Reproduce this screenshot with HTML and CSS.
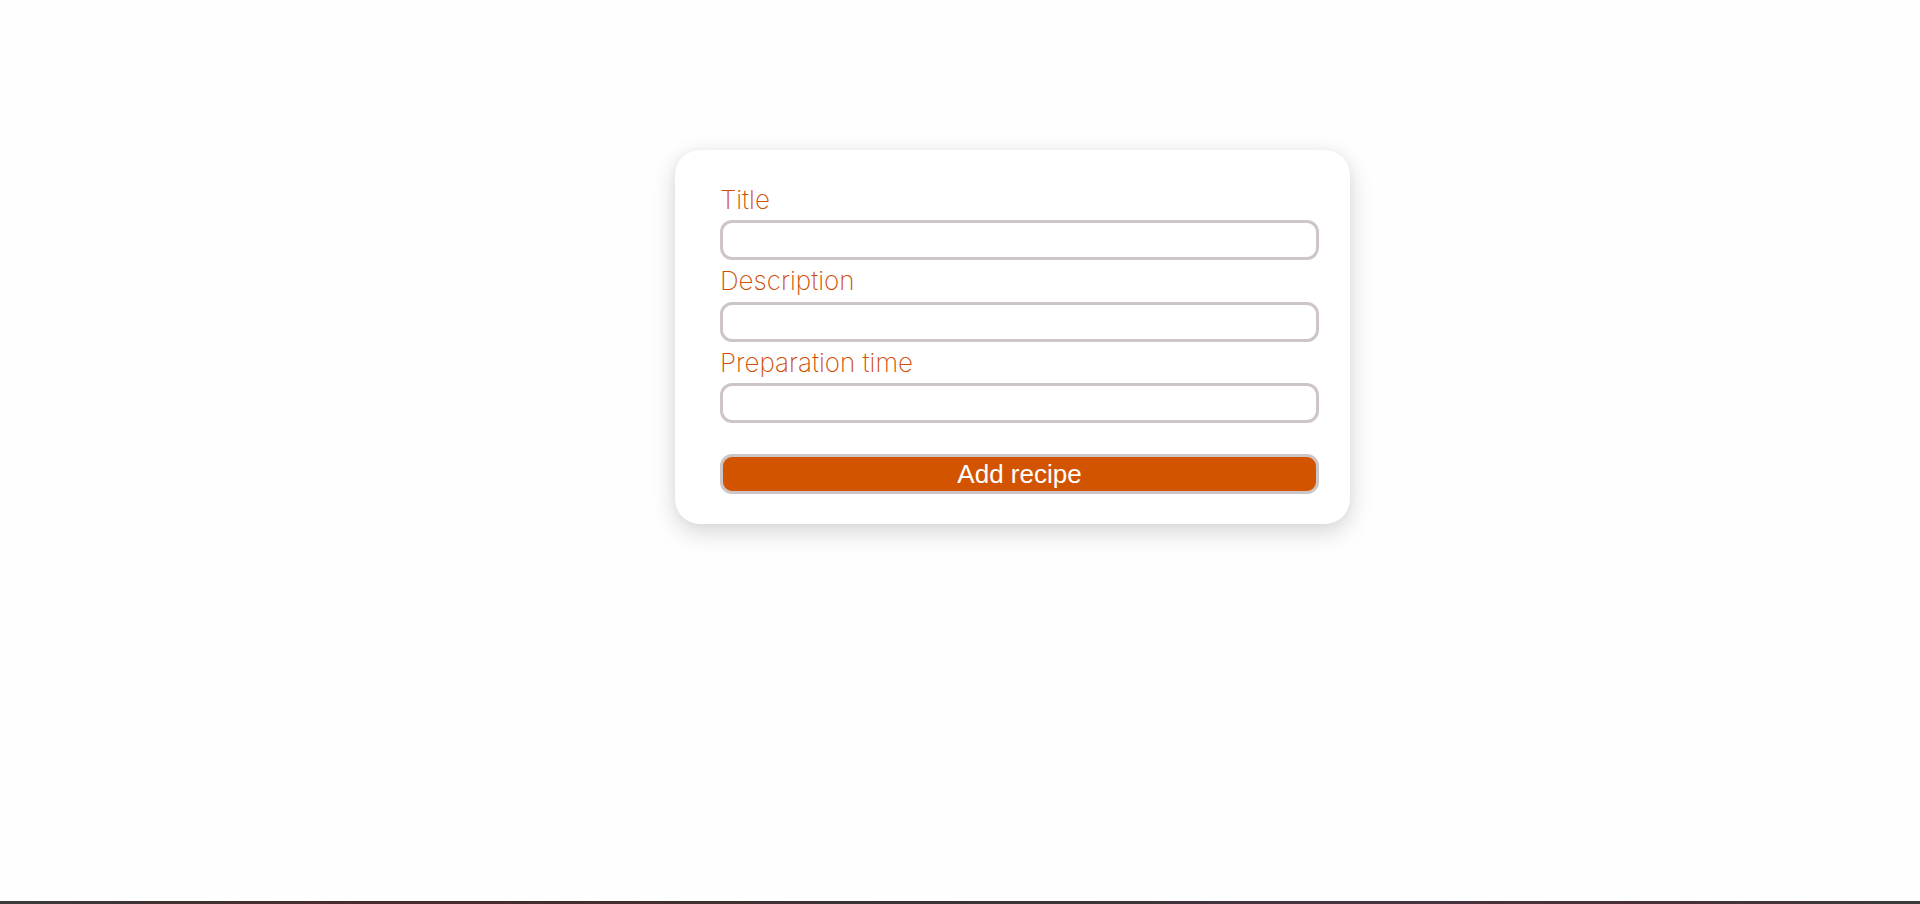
FILE: index.html
```html
<!DOCTYPE html>
<html lang="en">
<head>
<meta charset="utf-8">
<title>Add recipe</title>
<link rel="stylesheet" href="styles.css">
</head>
<body>
<div class="page">
  <main class="main">
    <form class="card">
      <label class="label" for="title">Title</label>
      <input class="field" id="title" type="text">
      <label class="label" for="description">Description</label>
      <input class="field" id="description" type="text">
      <label class="label" for="prep">Preparation time</label>
      <input class="field" id="prep" type="text">
      <button class="submit" type="button">Add recipe</button>
    </form>
  </main>
  <div class="bottom-bar"></div>
</div>
</body>
</html>
```
FILE: styles.css
```css
* { box-sizing: border-box; }
html, body { margin: 0; padding: 0; background: #fefefe; }
.page {
  min-height: 100vh;
  display: flex;
  flex-direction: column;
}
.main {
  flex: 1;
  display: flex;
  justify-content: center;
  align-items: flex-start;
  padding-top: 150px;
  padding-left: 105px;
}
.card {
  width: 675px;
  background: #ffffff;
  border-radius: 25px;
  box-shadow: 0 8px 24px rgba(0, 0, 0, 0.16), 0 0 10px rgba(0, 0, 0, 0.04);
  padding: 28.5px 31px 30px 45px;
  display: flex;
  flex-direction: column;
}
.label {
  font-family: Inter, "Noto Sans", sans-serif;
  font-weight: 250;
  font-size: 26px;
  line-height: 41.5px;
  color: #d04e05;
}
.field {
  height: 40px;
  width: 100%;
  border: 3px solid #cdc5c6;
  border-radius: 12px;
  background: #ffffff;
  margin: 0;
  padding: 0 10px;
  font-family: Inter, sans-serif;
  font-size: 18px;
  outline: none;
}
.submit {
  margin-top: 31px;
  height: 40px;
  width: 100%;
  border: 3px solid #cdc5c6;
  border-radius: 12px;
  background: #d35400;
  color: #ffffff;
  font-family: "Liberation Sans", Arial, sans-serif;
  font-size: 26px;
  line-height: 1;
  padding: 0;
  cursor: pointer;
}
.bottom-bar {
  height: 3px;
  background: linear-gradient(90deg, #3a3a3c 0%, #4a2a2a 20%, #3c3335 45%, #433540 70%, #4a2f38 85%, #3a3a3c 100%);
}
```
